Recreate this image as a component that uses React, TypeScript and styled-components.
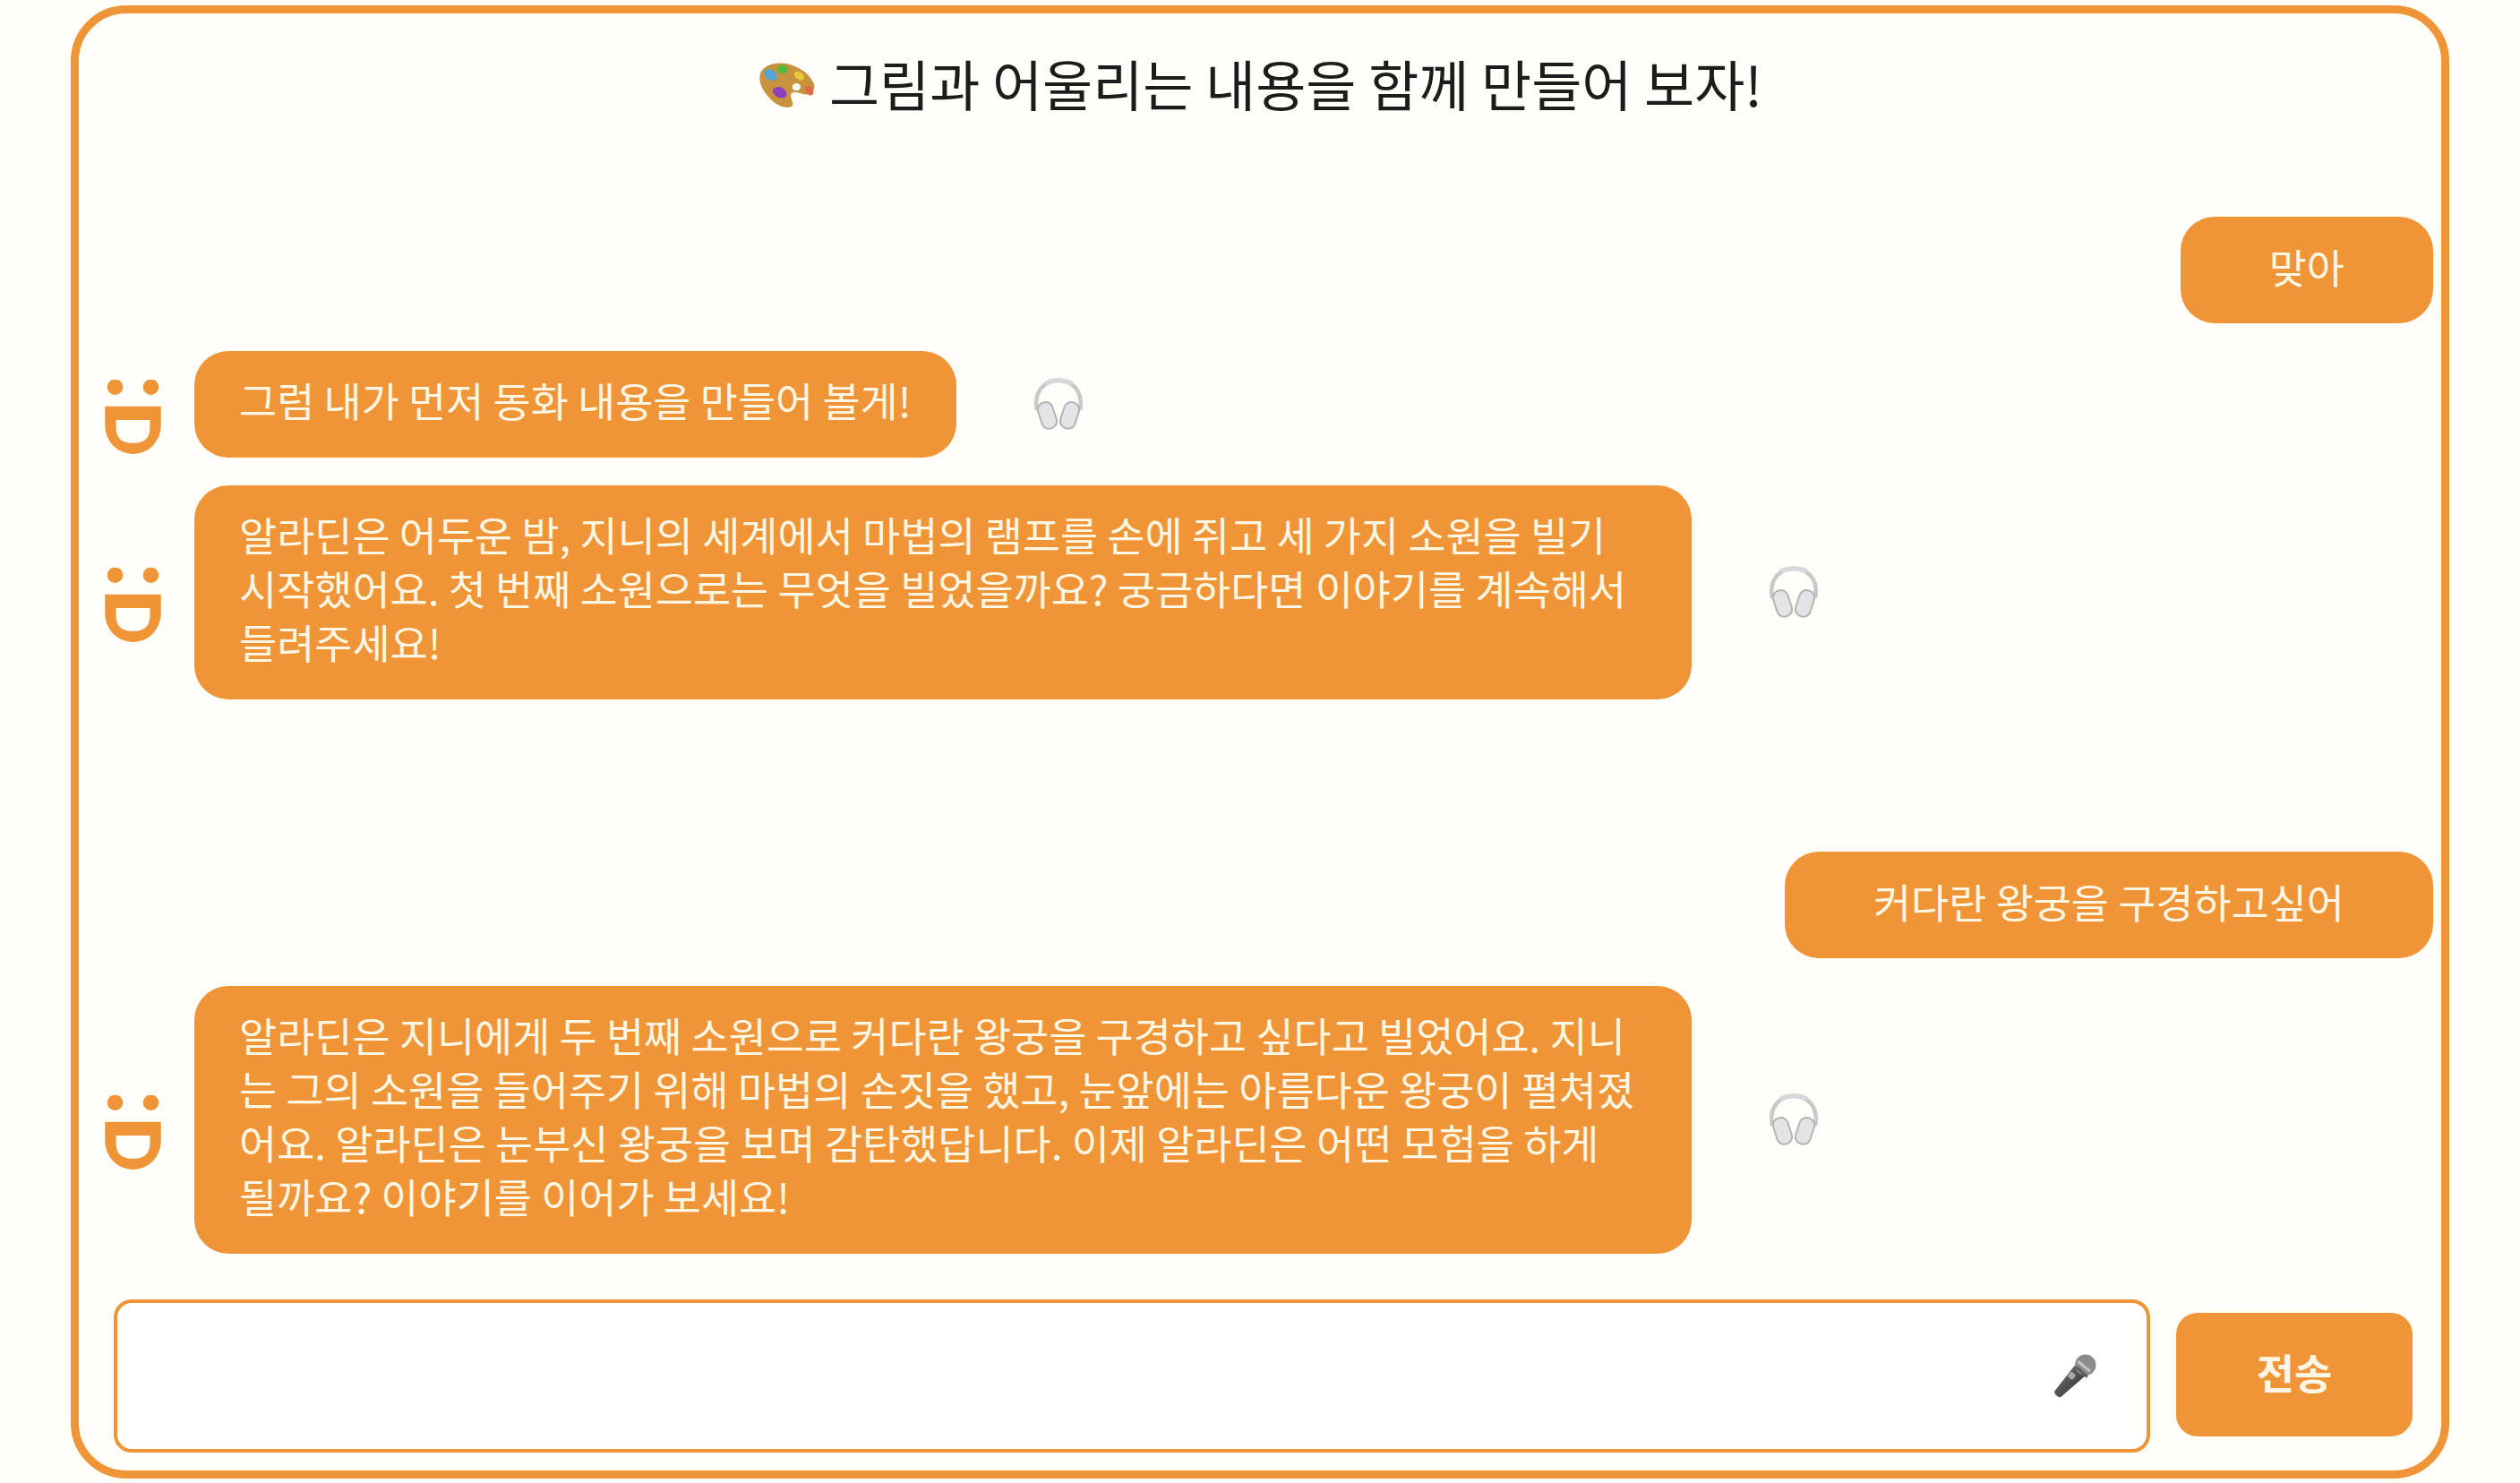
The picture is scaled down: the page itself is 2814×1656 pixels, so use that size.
import React from 'react';
import styled, { createGlobalStyle } from 'styled-components';

const ORANGE = '#ef9537';
const CREAM = '#fff6e3';

const messages = [
  { id: 1, from: 'user', lines: ['맞아'] },
  { id: 2, from: 'bot', lines: ['그럼 내가 먼저 동화 내용을 만들어 볼게!'] },
  {
    id: 3,
    from: 'bot',
    lines: [
      '알라딘은 어두운 밤, 지니의 세계에서 마법의 램프를 손에 쥐고 세 가지 소원을 빌기',
      '시작했어요. 첫 번째 소원으로는 무엇을 빌었을까요? 궁금하다면 이야기를 계속해서',
      '들려주세요!',
    ],
  },
  { id: 4, from: 'user', spaced: true, lines: ['커다란 왕궁을 구경하고싶어'] },
  {
    id: 5,
    from: 'bot',
    lines: [
      '알라딘은 지니에게 두 번째 소원으로 커다란 왕궁을 구경하고 싶다고 빌었어요. 지니',
      '는 그의 소원을 들어주기 위해 마법의 손짓을 했고, 눈앞에는 아름다운 왕궁이 펼쳐졌',
      '어요. 알라딘은 눈부신 왕궁을 보며 감탄했답니다. 이제 알라딘은 어떤 모험을 하게',
      '될까요? 이야기를 이어가 보세요!',
    ],
  },
];

function PaletteIcon() {
  return (
    <PaletteSvg viewBox="0 0 62 50">
      <path
        fill="#c8923f"
        fillRule="evenodd"
        d="M3 12C8 2 22-1 36 3c12 4 21 11 25 21 2 8-5 12-11 11-6-2-12-4-14 0-1 5 4 9 1 13-4 3-17 0-25-10C6 31 0 22 3 12ZM42 23a4.500 4 0 1 0 .01 8 4.500 4 0 0 0-.01-8Z"
      />
      <ellipse cx="14" cy="14" rx="7.500" ry="5.500" fill="#4ea6dc" transform="rotate(35 14 14)" />
      <ellipse cx="27" cy="8" rx="6" ry="5" fill="#57b83c" />
      <ellipse cx="45" cy="15" rx="6" ry="4" fill="#e8c93a" transform="rotate(35 45 15)" />
      <ellipse cx="24" cy="33" rx="8" ry="5.500" fill="#8d3fc0" transform="rotate(25 24 33)" />
      <ellipse cx="56" cy="31" rx="4" ry="5.500" fill="#e0694a" transform="rotate(-30 56 31)" />
    </PaletteSvg>
  );
}

function BotAvatar() {
  return (
    <AvatarSvg viewBox="0 0 61 82">
      <circle cx="11" cy="8" r="8.500" fill={ORANGE} />
      <circle cx="50" cy="8" r="8.500" fill={ORANGE} />
      <path
        fill={ORANGE}
        fillRule="evenodd"
        d="M0 29H61V50A30.500 31 0 0 1 0 50ZM12 44V52Q12 69 29 69H32Q49 69 49 52V44Z"
      />
    </AvatarSvg>
  );
}

function HeadphoneIcon() {
  return (
    <HeadphoneSvg viewBox="0 0 54 58">
      <path d="M3 36C-1 14 12 3 27 3s28 11 24 33" fill="none" stroke="#c9c9cb" strokeWidth="4.500" />
      <path d="M12 6Q27-1 42 6" fill="none" stroke="#d8d8da" strokeWidth="5" />
      <rect x="6" y="27" width="17" height="30" rx="8" fill="#e4e4e6" stroke="#b4b4b6" strokeWidth="2" transform="rotate(-18 14 42)" />
      <rect x="31" y="27" width="17" height="30" rx="8" fill="#e4e4e6" stroke="#b4b4b6" strokeWidth="2" transform="rotate(18 40 42)" />
    </HeadphoneSvg>
  );
}

function MicIcon() {
  return (
    <MicSvg viewBox="0 0 47 48">
      <defs>
        <linearGradient id="micBody" x1="0" y1="0" x2="1" y2="1">
          <stop offset="0" stopColor="#777" />
          <stop offset="1" stopColor="#2d2d2d" />
        </linearGradient>
      </defs>
      <path d="M26 9 38 21 8 47C5 48 1 44 1 41Z" fill="url(#micBody)" />
      <circle cx="35" cy="12" r="11.500" fill="#8b8b8b" />
      <path d="M25 14 37 25" stroke="#5c5c5c" strokeWidth="3" />
      <path d="M27 8 40 19" stroke="#c6c6c6" strokeWidth="3" />
      <rect x="17" y="20" width="7" height="7" rx="2" fill="#a8a8a8" transform="rotate(42 20 23)" />
    </MicSvg>
  );
}

export default function App() {
  return (
    <>
      <GlobalStyle />
      <Frame>
        <Title>
          <PaletteIcon />
          그림과 어울리는 내용을 함께 만들어 보자!
        </Title>

        <ChatList>
          {messages.map((message) =>
            message.from === 'user' ? (
              <UserRow key={message.id} $spaced={message.spaced}>
                <UserBubble>{message.lines[0]}</UserBubble>
              </UserRow>
            ) : (
              <BotRow key={message.id}>
                <BotAvatar />
                <BotBubble $wide={message.lines.length > 1}>
                  {message.lines.map((line) => (
                    <Line key={line}>{line}</Line>
                  ))}
                </BotBubble>
                <ListenButton type="button" aria-label="듣기">
                  <HeadphoneIcon />
                </ListenButton>
              </BotRow>
            ),
          )}
        </ChatList>

        <InputRow>
          <InputBox>
            <TextInput type="text" />
            <MicIcon />
          </InputBox>
          <SendButton type="button">전송</SendButton>
        </InputRow>
      </Frame>
    </>
  );
}

const GlobalStyle = createGlobalStyle`
  html, body {
    margin: 0;
    padding: 0;
    background: #fffef9;
  }
  body {
    font-family: 'Noto Sans CJK KR', 'Noto Sans', sans-serif;
  }
`;

const Frame = styled.main`
  box-sizing: border-box;
  display: flex;
  flex-direction: column;
  width: 2656px;
  height: 1645px;
  margin: 6px 0 0 79px;
  border: 9px solid ${ORANGE};
  border-radius: 62px;
`;

const Title = styled.h1`
  box-sizing: border-box;
  display: flex;
  align-items: center;
  justify-content: center;
  gap: 16px;
  height: 159px;
  margin: 0;
  padding-bottom: 5px;
  font-size: 61px;
  font-weight: 400;
  color: #1c1c1c;
`;

const PaletteSvg = styled.svg`
  width: 64px;
  height: 52px;
  flex: none;
  margin-top: 6px;
`;

const ChatList = styled.section`
  flex: 1;
  display: flex;
  flex-direction: column;
  gap: 31px;
  padding: 68px 9px 0 29px;
`;

const UserRow = styled.div<{ $spaced?: boolean }>`
  display: flex;
  justify-content: flex-end;
  margin-top: ${(p) => (p.$spaced ? '139px' : '0')};
`;

const UserBubble = styled.div`
  height: 119px;
  padding: 0 99px 10px;
  box-sizing: border-box;
  display: flex;
  align-items: center;
  background: ${ORANGE};
  border-radius: 38px;
  color: ${CREAM};
  font-size: 45.8px;
  font-weight: 400;
`;

const BotRow = styled.div`
  display: flex;
  align-items: center;
`;

const AvatarSvg = styled.svg`
  flex: none;
  width: 63px;
  height: 84px;
  margin: 28px 37px 0 0;
`;

const BotBubble = styled.div<{ $wide: boolean }>`
  box-sizing: border-box;
  width: ${(p) => (p.$wide ? '1672px' : '851px')};
  padding: 24px 50px 35px;
  background: ${ORANGE};
  border-radius: 38px;
  color: ${CREAM};
  font-size: 45.8px;
  font-weight: 400;
  line-height: 60px;
`;

const Line = styled.div`
  white-space: nowrap;
`;

const ListenButton = styled.button`
  flex: none;
  display: flex;
  margin: -2px 0 0 87px;
  padding: 0;
  border: none;
  background: none;
`;

const HeadphoneSvg = styled.svg`
  width: 54px;
  height: 58px;
`;

const InputRow = styled.div`
  display: flex;
  align-items: center;
  gap: 29px;
  padding: 0 32px 20px 39px;
`;

const InputBox = styled.div`
  box-sizing: border-box;
  flex: 1;
  display: flex;
  align-items: center;
  height: 171px;
  padding: 0 56px 0 20px;
  border: 4px solid ${ORANGE};
  border-radius: 20px;
  background: #fffffd;
`;

const TextInput = styled.input`
  flex: 1;
  min-width: 0;
  border: none;
  outline: none;
  background: transparent;
  font-size: 46px;
`;

const MicSvg = styled.svg`
  flex: none;
  width: 48px;
  height: 49px;
`;

const SendButton = styled.button`
  flex: none;
  width: 264px;
  height: 138px;
  margin-top: -3px;
  padding: 0 0 8px;
  border: none;
  border-radius: 24px;
  background: ${ORANGE};
  color: ${CREAM};
  font-family: inherit;
  font-size: 46px;
  font-weight: 700;
`;
